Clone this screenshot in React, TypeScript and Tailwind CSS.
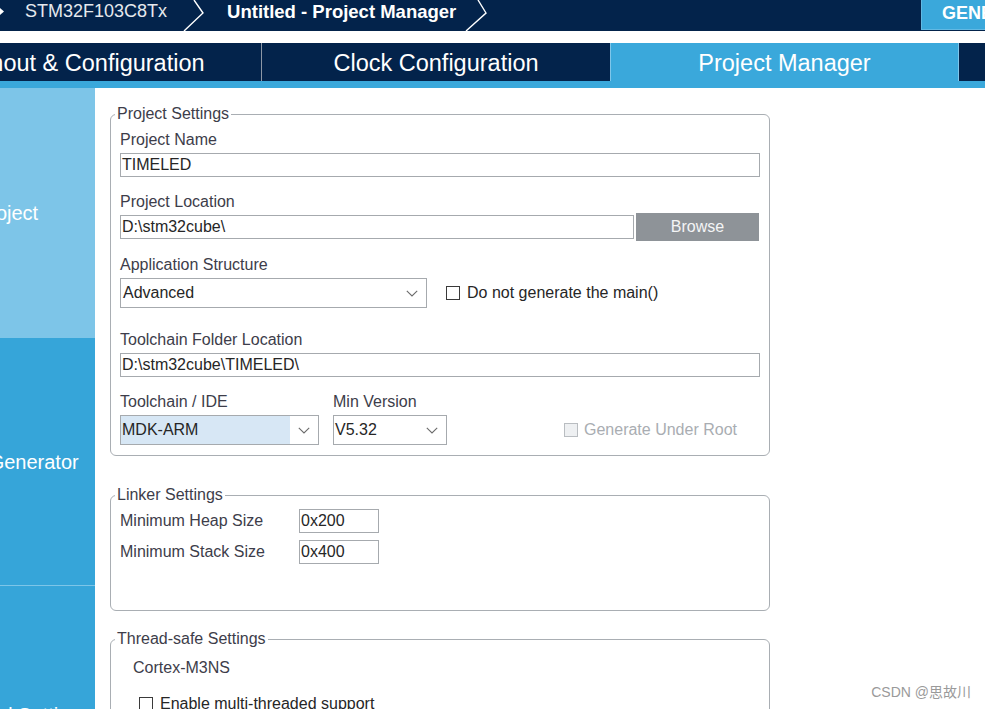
import React from "react";

function Chev({ className = "" }: { className?: string }) {
  return (
    <svg className={className} width="12" height="7" viewBox="0 0 12 7" fill="none">
      <path d="M0.8 0.8 6 6 11.2 0.8" stroke="#6b6b6b" strokeWidth="1.1" />
    </svg>
  );
}

function Label({ children, className = "" }: { children: React.ReactNode; className?: string }) {
  return <div className={"text-[16px] leading-[18px] text-[#3d3d4a] " + className}>{children}</div>;
}

function Input({ value, className = "" }: { value: string; className?: string }) {
  return (
    <div className={"h-[24px] border border-[#a6aaae] flex items-center pl-[1px] text-[16px] text-[#262626] whitespace-nowrap overflow-hidden " + className}>
      {value}
    </div>
  );
}

function Legend({ children }: { children: React.ReactNode }) {
  return (
    <legend className="-ml-[5px] px-[2px] text-[16px] leading-[18px] text-[#3d3d4a]">{children}</legend>
  );
}

export default function App() {
  return (
    <div className="relative w-[985px] h-[709px] overflow-hidden bg-white font-['Liberation_Sans',Arial,'Noto_Sans_CJK_SC',sans-serif]">
      {/* top breadcrumb bar */}
      <div className="h-[31px] bg-[#03234b] flex items-start overflow-hidden">
        <svg width="6" height="31" viewBox="0 0 6 31" className="shrink-0">
          <path d="M0 8 L4 11.5 L0 15 Z" fill="#ffffff" />
        </svg>
        <div className="ml-[19px] h-[23px] flex items-center text-[18px] text-[#e6e9ee] whitespace-nowrap">STM32F103C8Tx</div>
        <svg width="22" height="31" viewBox="0 0 22 31" className="ml-[16px] shrink-0" fill="none">
          <polyline points="11,0 20,13 1,31" stroke="#ffffff" strokeWidth="1.4" />
        </svg>
        <div className="ml-[22px] h-[23px] flex items-center text-[18.5px] font-bold text-white whitespace-nowrap">
          Untitled - Project Manager
        </div>
        <svg width="23" height="31" viewBox="0 0 23 31" className="ml-[9px] shrink-0" fill="none">
          <polyline points="13,0 21,13 1,31" stroke="#ffffff" strokeWidth="1.4" />
        </svg>
        <div className="ml-auto w-[64px] h-[30px] bg-[#3aa8db] border-l border-b border-[#62b9e3] pl-[20px] pb-[2px] flex items-center text-[18px] font-bold text-white whitespace-nowrap overflow-hidden">
          GENERATE CODE
        </div>
      </div>

      {/* white gap */}
      <div className="h-[12px] bg-white" />

      {/* tabs */}
      <div className="h-[38px] bg-[#03234b] overflow-hidden">
        <div className="flex h-full -ml-[87px] text-[23.5px] text-white whitespace-nowrap">
          <div className="w-[349px] shrink-0 border-r border-[#8d97a6] pt-[3px] flex items-center justify-center">
            Pinout &amp; Configuration
          </div>
          <div className="w-[348px] shrink-0 pt-[3px] flex items-center justify-center">Clock Configuration</div>
          <div className="w-[349px] shrink-0 bg-[#3aa8db] border-l border-r border-[#7fc6ea] pt-[3px] flex items-center justify-center">
            Project Manager
          </div>
        </div>
      </div>
      <div className="h-[7px] bg-[#3aa8db]" />

      {/* body */}
      <div className="flex h-[621px]">
        <div className="w-[95px] shrink-0 overflow-hidden">
          <div className="-ml-[81px] w-[176px] text-[20px] text-white whitespace-nowrap">
            <div className="h-[250px] bg-[#7dc5e8] flex items-center justify-center">Project</div>
            <div className="h-[247px] bg-[#36a5d9] flex items-center justify-center">Code Generator</div>
            <div className="h-[258px] bg-[#36a5d9] border-t border-[#7dc5e8] flex items-center justify-center">
              Advanced Settings
            </div>
          </div>
        </div>

        <div className="flex-1 pl-[15px] pt-[17px] overflow-hidden">
          {/* Project Settings */}
          <fieldset className="w-[660px] border border-[#a9aeb3] rounded-[6px] px-[9px] pb-[10px]">
            <Legend>Project Settings</Legend>
            <Label className="mt-[8px]">Project Name</Label>
            <Input value="TIMELED" className="mt-[4px] w-[640px]" />

            <Label className="mt-[16px]">Project Location</Label>
            <div className="mt-[2px] h-[28px] flex items-center gap-[2px]">
              <Input value="D:\stm32cube\" className="w-[514px]" />
              <div className="w-[123px] h-[28px] bg-[#8e9398] text-[#f4f5f6] text-[16px] flex items-center justify-center">
                Browse
              </div>
            </div>

            <Label className="mt-[15px]">Application Structure</Label>
            <div className="mt-[4px] h-[30px] flex items-center">
              <div className="w-[307px] h-[30px] border border-[#a6aaae] flex items-center text-[16px] text-[#262626]">
                <span className="flex-1 pl-[2px]">Advanced</span>
                <Chev className="mr-[8px]" />
              </div>
              <div className="ml-[19px] w-[14px] h-[14px] border border-[#3a3a3a] bg-white" />
              <span className="ml-[7px] text-[16px] text-[#262626]">Do not generate the main()</span>
            </div>

            <Label className="mt-[23px]">Toolchain Folder Location</Label>
            <Input value="D:\stm32cube\TIMELED\" className="mt-[4px] w-[640px]" />

            <div className="mt-[16px] flex">
              <Label className="w-[213px]">Toolchain / IDE</Label>
              <Label>Min Version</Label>
            </div>
            <div className="mt-[4px] h-[30px] flex items-center">
              <div className="w-[199px] h-[30px] border border-[#a6aaae] flex text-[16px] text-[#262626]">
                <span className="w-[169px] bg-[#d7e7f5] flex items-center pl-[1px]">MDK-ARM</span>
                <span className="flex-1 flex items-center justify-center">
                  <Chev />
                </span>
              </div>
              <div className="ml-[14px] w-[114px] h-[30px] border border-[#a6aaae] flex items-center text-[16px] text-[#262626]">
                <span className="flex-1 pl-[1px]">V5.32</span>
                <Chev className="mr-[8px]" />
              </div>
              <div className="ml-[117px] w-[14px] h-[14px] border border-[#b9bdc1] bg-[#eef0f2]" />
              <span className="ml-[6px] text-[16px] text-[#a9adb2]">Generate Under Root</span>
            </div>
          </fieldset>

          {/* Linker Settings */}
          <fieldset className="mt-[30px] w-[660px] border border-[#a9aeb3] rounded-[6px] px-[9px] pb-[46px]">
            <Legend>Linker Settings</Legend>
            <div className="mt-[5px] h-[24px] flex items-center">
              <Label className="w-[179px]">Minimum Heap Size</Label>
              <Input value="0x200" className="w-[80px]" />
            </div>
            <div className="mt-[7px] h-[24px] flex items-center">
              <Label className="w-[179px]">Minimum Stack Size</Label>
              <Input value="0x400" className="w-[80px]" />
            </div>
          </fieldset>

          {/* Thread-safe Settings */}
          <fieldset className="mt-[19px] w-[660px] border border-[#a9aeb3] rounded-[6px] px-[9px] pb-[40px]">
            <Legend>Thread-safe Settings</Legend>
            <Label className="mt-[11px] ml-[13px]">Cortex-M3NS</Label>
            <div className="mt-[18px] h-[18px] flex items-center ml-[19px]">
              <div className="w-[14px] h-[14px] border border-[#3a3a3a] bg-white" />
              <span className="ml-[7px] text-[16px] leading-[18px] text-[#262626]">Enable multi-threaded support</span>
            </div>
          </fieldset>
        </div>
      </div>

      <div className="absolute right-[14px] bottom-[9px] text-[14px] leading-[16px] text-[#9a9a9a] whitespace-nowrap">
        CSDN @思故川
      </div>
    </div>
  );
}
